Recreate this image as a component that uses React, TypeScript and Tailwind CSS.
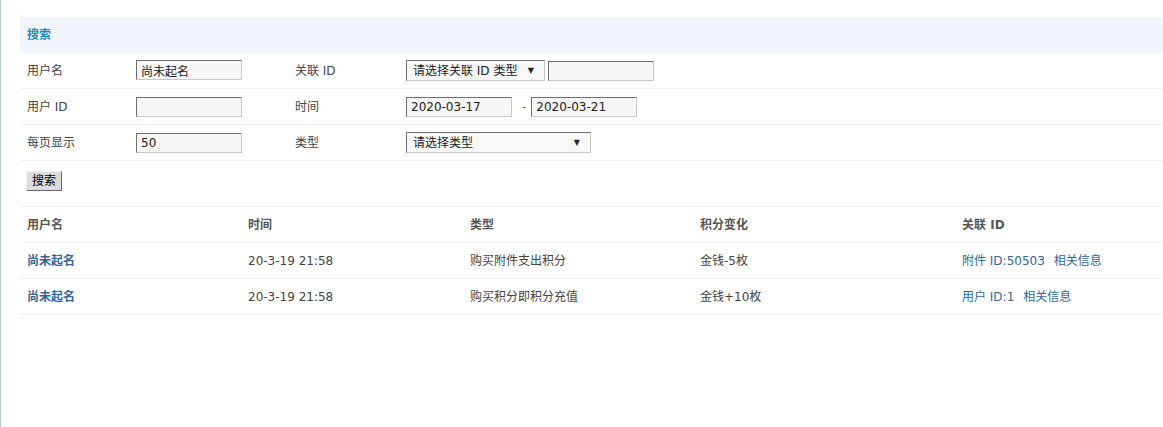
import React from "react";

const inputCls =
  "box-border w-[106px] h-[20px] border border-solid border-t-[#6f6f6f] border-l-[#6f6f6f] border-r-[#c8c8c8] border-b-[#c8c8c8] bg-[#f6f6f6] px-[4px] text-[12px] text-[#222] outline-none font-['DejaVu_Sans','Noto_Sans_CJK_SC',sans-serif]";

function Input({ value = "" }: { value?: string }) {
  return <input readOnly value={value} className={inputCls} />;
}

function Select({ text, w }: { text: string; w: string }) {
  return (
    <div
      className={`box-border ${w} h-[21px] border border-solid border-t-[#6f6f6f] border-l-[#6f6f6f] border-r-[#c8c8c8] border-b-[#c8c8c8] bg-[#f8f8f8] flex items-center justify-between pl-[6px] pr-[10px] text-[#222]`}
    >
      <span>{text}</span>
      <span className="text-[8px] leading-none">▼</span>
    </div>
  );
}

function FormRow({
  l1,
  c1,
  l2,
  c2,
}: {
  l1: string;
  c1: React.ReactNode;
  l2: string;
  c2: React.ReactNode;
}) {
  return (
    <div className="grid grid-cols-[109px_159px_111px_1fr] h-[36px] items-center border-b border-[#f0f0f0]">
      <div className="pl-[7px]">{l1}</div>
      <div className="pl-[7px]">{c1}</div>
      <div className="pl-[7px]">{l2}</div>
      <div className="pl-[7px] flex items-center">{c2}</div>
    </div>
  );
}

const rows = [
  {
    user: "尚未起名",
    time: "20-3-19 21:58",
    type: "购买附件支出积分",
    change: "金钱-5枚",
    rel: "附件 ID:50503",
  },
  {
    user: "尚未起名",
    time: "20-3-19 21:58",
    type: "购买积分即积分充值",
    change: "金钱+10枚",
    rel: "用户 ID:1",
  },
];

export default function App() {
  return (
    <div className="min-h-[427px] bg-white border-l border-[#b8cad4] pl-[19px] pt-[17px] text-[12px] text-[#444] font-['DejaVu_Sans','Noto_Sans_CJK_SC',sans-serif]">
      <div className="h-[36px] bg-[#f0f6fc] flex items-center pl-[7px] font-bold text-[#1a8dbf]">
        搜索
      </div>
      <FormRow
        l1="用户名"
        c1={<Input value="尚未起名" />}
        l2="关联 ID"
        c2={
          <>
            <Select text="请选择关联 ID 类型" w="w-[139px]" />
            <div className="w-[3px]" />
            <Input />
          </>
        }
      />
      <FormRow
        l1="用户 ID"
        c1={<Input />}
        l2="时间"
        c2={
          <>
            <Input value="2020-03-17" />
            <span className="ml-[10px] mr-[5px] text-[#666]">-</span>
            <Input value="2020-03-21" />
          </>
        }
      />
      <FormRow
        l1="每页显示"
        c1={<Input value="50" />}
        l2="类型"
        c2={<Select text="请选择类型" w="w-[185px]" />}
      />
      <div className="h-[46px] border-b border-[#f0f0f0] pl-[6px] pt-[10px]">
        <button className="box-border h-[20px] w-[36px] bg-[#dcdcdc] border border-solid border-t-[#f4f4f4] border-l-[#f4f4f4] border-r-[#6a6a6a] border-b-[#6a6a6a] text-[12px] text-black leading-none p-0">
          搜索
        </button>
      </div>
      <div className="grid grid-cols-[221px_222px_230px_262px_1fr] h-[36px] items-center border-b border-[#f0f0f0] font-bold text-[#555]">
        <div className="pl-[7px]">用户名</div>
        <div className="pl-[7px]">时间</div>
        <div className="pl-[7px]">类型</div>
        <div className="pl-[7px]">积分变化</div>
        <div className="pl-[7px]">关联 ID</div>
      </div>
      {rows.map((r, i) => (
        <div
          key={i}
          className="grid grid-cols-[221px_222px_230px_262px_1fr] h-[36px] items-center border-b border-[#eeeeee]"
        >
          <div className="pl-[7px] font-bold text-[#336699]">{r.user}</div>
          <div className="pl-[7px]">{r.time}</div>
          <div className="pl-[7px]">{r.type}</div>
          <div className="pl-[7px]">{r.change}</div>
          <div className="pl-[7px] text-[#336699]">
            <span>{r.rel}</span>
            <span className="ml-[9px]">相关信息</span>
          </div>
        </div>
      ))}
    </div>
  );
}
